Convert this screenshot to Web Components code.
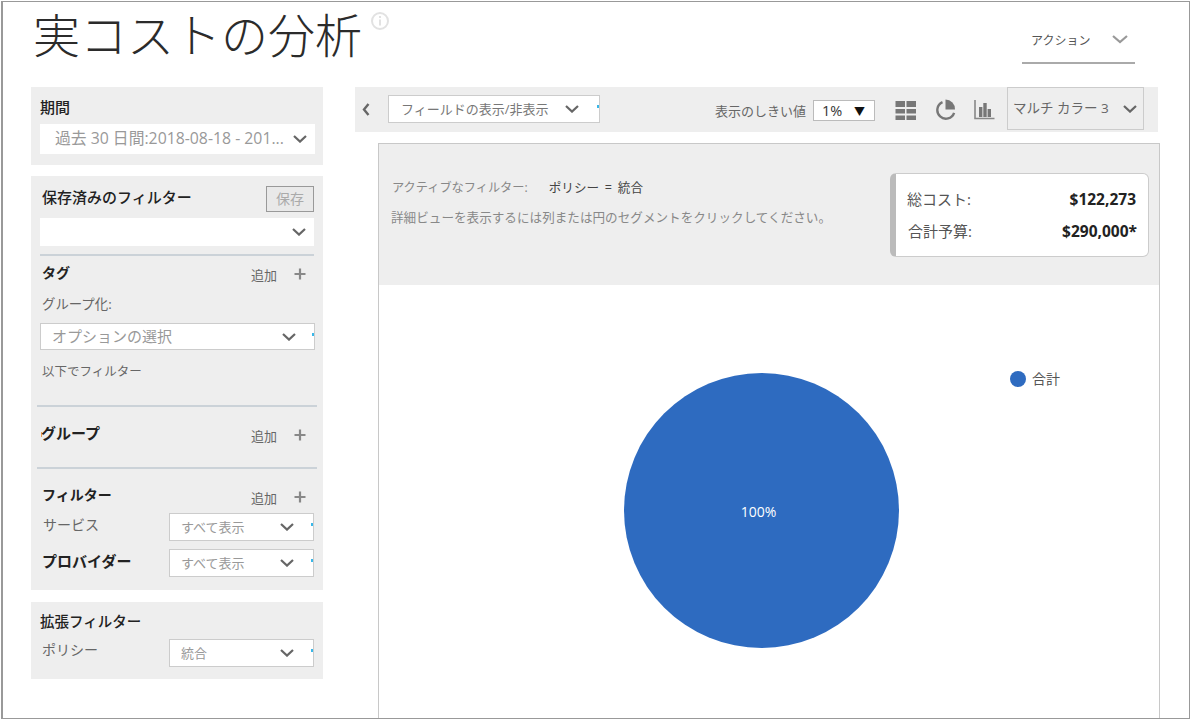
<!DOCTYPE html>
<html lang="ja">
<head>
<meta charset="utf-8">
<title>実コストの分析</title>
<style>
  html, body { margin: 0; background: #fff; overflow: hidden; }
  body { font-family: "Open Sans", "Noto Sans CJK JP", sans-serif; }
</style>
</head>
<body>
<cost-page></cost-page>

<script>
const chevron = `<svg class="chev" width="14" height="8" viewBox="0 0 14 8"><path d="M1 1l6 5.6L13 1" fill="none" stroke="currentColor" stroke-width="2.2"/></svg>`;

// small helper so every element below is just a name and its shadow html
function define(name, html) {
  customElements.define(name, class extends HTMLElement {
    connectedCallback() {
      if (this.shadowRoot) return;
      this.attachShadow({ mode: 'open' }).innerHTML = html;
    }
  });
}

// dropdown box, look is set from outside with custom properties
define('drop-select', `
<style>
  :host { display: block; box-sizing: border-box; position: relative; height: var(--h, 28px);
    background: #fff; border: var(--bd, 0 solid #ccc); color: var(--fg, #999);
    font-size: var(--fs, 13px); line-height: 1; }
  .in { display: flex; align-items: center; height: 100%; padding-left: var(--pl, 12px); white-space: nowrap; }
  .chev { position: absolute; right: var(--cr, 20px); top: 50%; margin-top: -4px; color: #666; }
  .tick { display: var(--tick, none); position: absolute; right: 0; top: 9px; width: 2px; height: 3px; background: #39b7e8; }
</style>
<div class="in"><slot></slot></div>${chevron}<span class="tick"></span>`);

define('add-link', `
<style>
  :host { display: flex; align-items: center; margin-left: auto; height: 24px; font-size: 13px; color: #666; }
  svg { margin-left: 17px; margin-right: 8px; }
</style>
<slot></slot>
<svg width="12" height="12" viewBox="0 0 12 12"><path d="M6 .5v11M.5 6h11" stroke="#888" stroke-width="2.2"/></svg>`);

define('side-panel', `
<style>
  :host { display: block; background: #eee; padding: var(--pad, 10px 9px); }
</style>
<slot></slot>`);

define('filter-sidebar', `
<style>
  :host { display: block; width: 292px; flex: none; color: #222; }
  * { box-sizing: border-box; }
  side-panel + side-panel { margin-top: 11px; }
  .h { font-weight: 500; font-size: 14px; line-height: 22px; white-space: nowrap; }
  .b { font-weight: 700; }
  .row { display: flex; height: 26px; }
  .row add-link { margin-top: 1px; }
  .lab { font-size: 13px; line-height: 20px; color: #666; white-space: nowrap; }
  .sel-row { display: flex; justify-content: space-between; }
  .sel-row .lab { line-height: 24px; font-size: 14px; padding-left: 1px; }
  .sel-row drop-select { width: 145px; --bd: 1px solid #ccc; --pl: 11px; --cr: 19px; --tick: block; }
  hr { border: 0; height: 2px; background: #cbd2d8; margin: 0; }
  hr.wide { margin-left: -3px; margin-right: -3px; }
  .save { width: 48px; height: 26px; margin-left: auto; border: 1px solid #999; background: #e9e9e9;
    color: #aaa; font-size: 14px; line-height: 24px; text-align: center; }
  .mark { display: inline-block; width: 1px; height: 5px; background: #e8a15a; vertical-align: 2px; margin-right: -1px; }
</style>
<side-panel style="--pad:9px 8px 11px 9px">
  <div class="h" style="font-size:15px;height:23px">期間</div>
  <drop-select style="margin-top:5px;--h:30px;--pl:15px;--fs:15.8px;--cr:8px">過去 30 日間:2018-08-18 - 201...</drop-select>
</side-panel>
<side-panel style="--pad:10px 9px 13px 9px">
  <div class="row"><div class="h" style="font-size:15px;padding-left:2px">保存済みのフィルター</div><div class="save">保存</div></div>
  <drop-select style="margin-top:6px;--cr:8px"></drop-select>
  <hr style="margin-top:8px">
  <div class="row" style="margin-top:5px"><div class="h b" style="padding:1px 0 0 2px">タグ</div><add-link>追加</add-link></div>
  <div class="lab" style="margin-top:7px;padding-left:2px;font-size:13.4px">グループ化:</div>
  <drop-select style="margin-top:9px;margin-right:-1px;--h:27px;--bd:1px solid #ccc;--fs:15px;--pl:11px;--cr:18px;--tick:block">オプションの選択</drop-select>
  <div class="lab" style="margin-top:12px;padding-left:2px;font-size:12.5px">以下でフィルター</div>
  <hr class="wide" style="margin-top:23px">
  <div class="row" style="margin-top:15px"><div class="h b" style="font-size:15px;padding-left:1px"><span class="mark"></span>グループ</div><add-link>追加</add-link></div>
  <hr class="wide" style="margin-top:19px">
  <div class="row" style="margin-top:15px"><div class="h b" style="padding-left:2px">フィルター</div><add-link>追加</add-link></div>
  <div class="sel-row" style="margin-top:3px"><div class="lab" style="padding-left:3px">サービス</div><drop-select>すべて表示</drop-select></div>
  <div class="sel-row" style="margin-top:8px"><div class="lab" style="color:#222;font-weight:700;font-size:15px;padding-left:2px">プロバイダー</div><drop-select>すべて表示</drop-select></div>
</side-panel>
<side-panel style="--pad:9px 9px 12px 9px;margin-top:12px">
  <div class="h" style="font-size:14.5px">拡張フィルター</div>
  <div class="sel-row" style="margin-top:6px"><div class="lab" style="line-height:22px;padding-left:2px">ポリシー</div><drop-select>統合</drop-select></div>
</side-panel>`);

define('chart-toolbar', `
<style>
  :host { display: flex; align-items: flex-start; height: 45px; background: #eee; flex: none; color: #666; }
  * { box-sizing: border-box; }
  .back { margin: 16px 0 0 7px; flex: none; }
  .fields { width: 212px; margin: 8px 0 0 18px; flex: none; --bd: 1px solid #ccc; --pl: 12px; --cr: 20px; --tick: block; --fg: #777; }
  .lab { margin: 14px 0 0 auto; font-size: 13px; line-height: 20px; white-space: nowrap; }
  .pct { width: 62px; height: 21px; margin: 13px 0 0 7px; flex: none; display: flex; align-items: center; justify-content: space-between;
    padding: 0 9px 0 8px; border: 1px solid #bbb; background: #fff; font-size: 14.5px; color: #333; }
  .pct i { font-style: normal; font-size: 11px; color: #111; }
  svg.ic { flex: none; margin-top: 14px; }
  .color { width: 137px; height: 43px; flex: none; margin-right: 14px; --h: 43px; --bd: 1px solid #ccc; --pl: 5px; --cr: 6px; --fg: #666; --fs: 13.5px; background: transparent; }
</style>
<svg class="back" width="8" height="13" viewBox="0 0 8 13"><path d="M6.5 1L2 6.5 6.5 12" fill="none" stroke="#666" stroke-width="2.4"/></svg>
<drop-select class="fields">フィールドの表示/非表示</drop-select>
<span class="lab">表示のしきい値</span>
<div class="pct"><span>1%</span><i>▼</i></div>
<svg class="ic" style="margin-left:20px" width="22" height="20" viewBox="0 0 22 20" fill="#777"><rect x=".5" width="9.5" height="6"/><rect x="11.5" width="9.5" height="6"/><rect x=".5" y="8" width="9.5" height="4.5"/><rect x="11.5" y="8" width="9.5" height="4.5"/><rect x=".5" y="14.5" width="9.5" height="4.5"/><rect x="11.5" y="14.5" width="9.5" height="4.5"/></svg>
<svg class="ic" style="margin:11px 0 0 17px" width="24" height="22" viewBox="0 0 24 22"><path d="M11.5 1.5a9.5 9.5 0 0 1 9.5 10h-9.5z" fill="#777"/><path d="M8.5 4.2a8.6 8.6 0 1 0 11.6 10.6" fill="none" stroke="#777" stroke-width="2.4"/></svg>
<svg class="ic" style="margin:13px 0 0 16px" width="22" height="20" viewBox="0 0 22 20"><path d="M1 0v18.5h19.5" fill="none" stroke="#888" stroke-width="1.6"/><path d="M5 7h3.4v10H5zM9.3 3h3.4v14H9.3zM13.6 9H17v8h-3.4z" fill="#777"/></svg>
<drop-select class="color" style="margin-left:11px">マルチ カラー 3</drop-select>`);

define('total-card', `
<style>
  :host { display: block; box-sizing: border-box; width: 259px; height: 84px; flex: none; margin: 29px 10px 0 auto;
    padding: 9px 12px 0 11px; background: #fff; border: 1px solid #ccc; border-left: 6px solid #bbb; border-radius: 6px; }
  div { display: flex; justify-content: space-between; height: 32px; line-height: 32px; font-size: 15px; color: #555; }
  b { color: #222; font-size: 15.5px; font-weight: 700; }
</style>
<div><span>総コスト:</span><b>$122,273</b></div>
<div style="padding-left:1px"><span>合計予算:</span><b style="margin-right:-1px">$290,000*</b></div>`);

define('cost-chart', `
<style>
  :host { display: flex; align-items: flex-start; padding: 88px 0 0 245px; }
  .pie { box-sizing: border-box; width: 275px; height: 275px; flex: none; border-radius: 50%; background: #2e6bc0; color: #fff;
    display: flex; align-items: center; justify-content: center; font-size: 14px; padding: 1px 6px 0 0; }
  .leg { display: flex; align-items: center; margin: -2px 0 0 111px; font-size: 14px; color: #555; line-height: 16px; }
  .leg i { width: 16px; height: 16px; border-radius: 50%; background: #2e6bc0; margin-right: 6px; }
</style>
<div class="pie">100%</div>
<div class="leg"><i></i>合計</div>`);

define('cost-card', `
<style>
  :host { display: block; box-sizing: border-box; flex: 1; margin: 11px -2px 0 23px; border: 1px solid #c8c8c8; border-bottom: 0; overflow: hidden; }
  .top { display: flex; height: 141px; background: #eee; font-size: 12.6px; color: #888; }
  .msg { padding: 34px 0 0 12px; white-space: nowrap; }
  .msg div { line-height: 20px; }
  .act { display: flex; padding-left: 1px; font-size: 12.2px; }
  .act span { color: #444; margin-left: 21px; word-spacing: 2.5px; font-size: 12.6px; }
</style>
<div class="top">
  <div class="msg">
    <div class="act">アクティブなフィルター:<span>ポリシー = 統合</span></div>
    <div style="margin-top:10px">詳細ビューを表示するには列または円のセグメントをクリックしてください。</div>
  </div>
  <total-card></total-card>
</div>
<cost-chart></cost-chart>`);

define('page-head', `
<style>
  :host { display: flex; height: 85px; flex: none; align-items: flex-start; }
  h1 { margin: 7px 0 0 30px; font-size: 47px; line-height: 52px; font-weight: 300; color: #2b2b2b; white-space: nowrap; }
  .info { margin: 9px 0 0 8px; flex: none; }
  .act { display: flex; align-items: center; box-sizing: border-box; width: 113px; height: 62px; margin: 0 54px 0 auto; padding: 15px 0 0 9px;
    border-bottom: 2px solid #aaa; font-size: 12px; color: #555; flex: none; }
  .act svg { margin-left: 22px; color: #888; }
</style>
<h1>実コストの分析</h1>
<svg class="info" width="20" height="20" viewBox="0 0 20 20"><circle cx="10" cy="10" r="8" fill="none" stroke="#e2e2e2" stroke-width="2"/><path d="M10 8.5v6M10 5v2" stroke="#e2e2e2" stroke-width="2"/></svg>
<div class="act">アクション<svg width="16" height="9" viewBox="0 0 16 9"><path d="M1 1l7 6 7-6" fill="none" stroke="#999" stroke-width="2.2"/></svg></div>`);

define('cost-page', `
<style>
  :host { display: flex; flex-direction: column; box-sizing: border-box; width: 1189px; height: 718px; margin: 1px 0 0 1px;
    border: 1px solid #999; border-left-width: 2px; overflow: hidden; }
  .body { display: flex; flex: 1; min-height: 0; padding-left: 28px; gap: 32px; }
  .main { display: flex; flex-direction: column; width: 803px; flex: none; }
</style>
<page-head></page-head>
<div class="body">
  <filter-sidebar></filter-sidebar>
  <div class="main">
    <chart-toolbar></chart-toolbar>
    <cost-card></cost-card>
  </div>
</div>`);
</script>
</body>
</html>
